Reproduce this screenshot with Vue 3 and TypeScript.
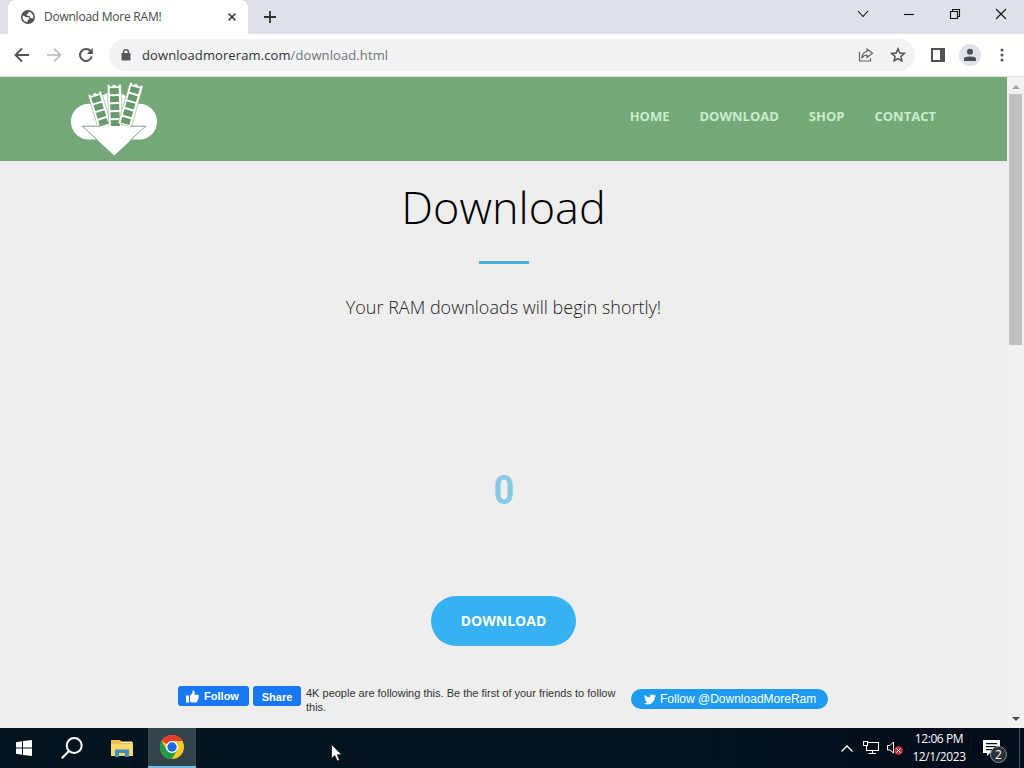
<template>
  <div class="desktop">
    <div class="browser">
      <!-- Tab strip -->
      <div class="tab-strip">
        <div class="tab">
          <svg class="favicon" width="14" height="14" viewBox="0 0 14 14">
            <circle cx="7" cy="7" r="7" fill="#505357" />
            <path d="M2 5.500L5.500 7.300L7.800 7.300L8.500 9L6.700 10L6.500 12C3.500 12 1.600 9.800 1.600 7ZM8 1.800L7 3.500L5.500 4.300L6 5.800L8.500 6L9.500 8L12.200 8.500C12.900 5.500 11 2.500 8 1.800Z" fill="#fff" />
          </svg>
          <span class="tab-title">Download More RAM!</span>
          <svg class="tab-close" width="8" height="8" viewBox="0 0 8 8">
            <path d="M.6 .6L7.400 7.400M7.400 .6L.6 7.400" stroke="#3c4043" stroke-width="1.500" />
          </svg>
        </div>
        <svg class="new-tab" width="12" height="12" viewBox="0 0 12 12">
          <path d="M6 0V12M0 6H12" stroke="#303236" stroke-width="1.800" />
        </svg>
        <div class="window-controls">
          <span v-for="control in windowControls" :key="control.name" class="window-control">
            <svg width="12" height="12" viewBox="0 0 12 12">
              <path :d="control.path" fill="none" stroke="#111" stroke-width="1.100" />
            </svg>
          </span>
        </div>
      </div>

      <!-- Toolbar -->
      <div class="toolbar">
        <span class="tool">
          <svg width="16" height="16" viewBox="0 0 16 16"><path d="M15 8H2M8 1.500L1.500 8L8 14.500" fill="none" stroke="#505357" stroke-width="1.900" /></svg>
        </span>
        <span class="tool">
          <svg width="16" height="16" viewBox="0 0 16 16"><path d="M1 8H14M8 1.500L14.500 8L8 14.500" fill="none" stroke="#b9bbbe" stroke-width="1.700" /></svg>
        </span>
        <span class="tool">
          <svg width="16" height="16" viewBox="0 0 16 16">
            <path d="M13.800 9.500A6 6 0 1 1 12.500 4L13.300 5" fill="none" stroke="#505357" stroke-width="2" />
            <path d="M14.800 1V7H8.800Z" fill="#505357" />
          </svg>
        </span>
        <div class="omnibox">
          <svg class="lock" width="10" height="12" viewBox="0 0 10 12">
            <path d="M2.500 5V3A2.500 2.300 0 0 1 7.500 3V5" fill="none" stroke="#55585c" stroke-width="1.400" />
            <rect x=".5" y="4" width="9" height="7.500" rx="1" fill="#55585c" />
          </svg>
          <span class="url">downloadmoreram.com<span class="url-path">/download.html</span></span>
          <span class="tool">
            <svg width="16" height="16" viewBox="0 0 16 16"><path d="M1.500 5V14H12.500V11M9 2L14.500 6.200L9 10.500V8C6.500 8 5 9 3.700 11.200C4 7.500 6 5 9 4.500Z" fill="none" stroke="#606367" stroke-width="1.200" /></svg>
          </span>
          <span class="tool">
            <svg width="16" height="16" viewBox="0 0 16 16"><path d="M8 1.800L9.800 6L14.300 6.400L10.900 9.400L11.900 13.800L8 11.500L4.100 13.800L5.100 9.400L1.700 6.400L6.200 6Z" fill="none" stroke="#505357" stroke-width="1.500" /></svg>
          </span>
        </div>
        <span class="tool">
          <svg width="14" height="14" viewBox="0 0 14 14"><path d="M0 0H14V14H0ZM2 2V12H9V2Z" fill="#505357" fill-rule="evenodd" /></svg>
        </span>
        <span class="tool">
          <svg width="22" height="22" viewBox="0 0 22 22">
            <circle cx="11" cy="11" r="11" fill="#dfe2e9" />
            <circle cx="11" cy="7.800" r="3" fill="#4b4f58" />
            <path d="M5 17V14.500C5 11.700 17 11.700 17 14.500V17Z" fill="#4b4f58" />
          </svg>
        </span>
        <span class="tool">
          <svg width="4" height="14" viewBox="0 0 4 14"><g fill="#505357"><circle cx="2" cy="2" r="1.500" /><circle cx="2" cy="7" r="1.500" /><circle cx="2" cy="12" r="1.500" /></g></svg>
        </span>
      </div>

      <!-- Page -->
      <div class="viewport">
        <div class="page">
          <header class="site-header">
            <svg class="logo" width="88" height="76" viewBox="0 0 88 76">
              <path d="M18.500 21.800H69.500A17.500 17.800 0 0 1 69.500 57.500H18.500A17.500 17.800 0 0 1 18.500 21.800Z" fill="#fff" />
              <path d="M22 26Q30 11 42 10Q58 10 66 26V44H24Z" fill="#fff" />
              <g v-for="stick in ramSticks" :key="stick.transform" :transform="stick.transform">
                <path d="M0 0H2.500V1.500H5V0H8.500V1.500H11V0H13.800V43H0Z" fill="#fff" stroke="#75a878" stroke-width=".5" />
                <rect v-for="n in stick.chips" :key="n" x="2.200" :y="n * 8 - 4.500" width="9" height="6" fill="#689a6d" />
              </g>
              <path d="M12.300 44.200H75.700L44.300 73.500Z" fill="#fff" />
              <path d="M30 44.200H12.300L28 58.500M60 44.200H75.700L60 58.500" fill="none" stroke="#76937a" stroke-width=".9" />
            </svg>
            <nav class="site-nav">
              <a v-for="link in navLinks" :key="link">{{ link }}</a>
            </nav>
          </header>
          <main class="content">
            <h1>Download</h1>
            <div class="divider"></div>
            <p class="lead">Your RAM downloads will begin shortly!</p>
            <div class="counter">0</div>
            <button class="download">DOWNLOAD</button>
            <div class="social">
              <span class="fb-button fb-follow">
                <svg width="13" height="13" viewBox="0 0 13 13"><path d="M0 5.500H3V12.500H0ZM4 5.500L6.500 3V.5C8.500 0 9.200 2 8.300 4.700H11.800C13 4.700 13 6.300 12.300 6.700C13 7.300 12.700 8.500 12 8.700C12.400 9.500 12 10.300 11.400 10.500C11.500 12 10.800 12.500 9.500 12.500H6L4 11.800Z" fill="#fff" /></svg>
                Follow
              </span>
              <span class="fb-button fb-share">Share</span>
              <p class="fb-text">4K people are following this. Be the first of your friends to follow<br>this.</p>
              <span class="twitter">
                <svg width="12" height="11" viewBox="0 0 24 20"><path d="M24 2.400a10 10 0 0 1-2.800.8A5 5 0 0 0 23.300.5a10 10 0 0 1-3.100 1.200 4.900 4.900 0 0 0-8.400 4.500A14 14 0 0 1 1.700 1a4.900 4.900 0 0 0 1.500 6.600A5 5 0 0 1 1 7a4.900 4.900 0 0 0 3.900 4.900 5 5 0 0 1-2.200.1 4.900 4.900 0 0 0 4.600 3.400A10 10 0 0 1 0 17.500 14 14 0 0 0 21.500 5a10 10 0 0 0 2.500-2.600Z" fill="#fff" /></svg>
                <span>Follow @DownloadMoreRam</span>
              </span>
            </div>
          </main>
        </div>
        <div class="scrollbar">
          <svg width="8" height="4" viewBox="0 0 8 4"><path d="M0 4L4 0L8 4Z" fill="#a1a1a1" /></svg>
          <div class="thumb"></div>
          <svg class="scroll-down" width="8" height="4" viewBox="0 0 8 4"><path d="M0 0L4 4L8 0Z" fill="#4b4b4b" /></svg>
        </div>
      </div>
    </div>

    <!-- Taskbar -->
    <div class="taskbar">
      <span class="task">
        <svg width="16" height="16" viewBox="0 0 16 16"><path d="M0 2.300L6 1.300V7.500H0ZM7 1.100L16 0V7.500H7ZM0 8.500H6V14.700L0 13.700ZM7 8.500H16V16L7 14.900Z" fill="#fff" /></svg>
      </span>
      <span class="task">
        <svg width="22" height="22" viewBox="0 0 22 22"><circle cx="13.200" cy="8.500" r="7.500" fill="none" stroke="#fff" stroke-width="2" /><path d="M8 14L.8 21.300" stroke="#fff" stroke-width="2.200" /></svg>
      </span>
      <span class="task task-files">
        <svg width="22" height="19" viewBox="0 0 22 19">
          <path d="M0 1H9L11 3H22V17H0Z" fill="#edbd4e" />
          <path d="M0 5H22V17H0Z" fill="#fbd76f" />
          <path d="M10 2.500H21V4H10Z" fill="#fff0c0" />
          <path d="M4 10.500H18V18H14V14H8V18H4Z" fill="#408fbd" />
        </svg>
      </span>
      <span class="task task-active">
        <svg width="24" height="24" viewBox="0 0 24 24">
          <circle cx="12" cy="12" r="12" fill="#fbc928" />
          <path d="M12 12L1.600 6A12 12 0 0 1 22.400 6H12Z" fill="#e33b2e" />
          <path d="M1.600 6A12 12 0 0 0 12 24L17.200 15L12 12L6.800 15Z" fill="#25994a" />
          <circle cx="12" cy="12" r="6" fill="#fff" />
          <circle cx="12" cy="12" r="4.700" fill="#1c6be0" />
        </svg>
      </span>
      <div class="tray">
        <svg width="12" height="7" viewBox="0 0 12 7"><path d="M.5 6.500L6 1L11.500 6.500" fill="none" stroke="#fff" stroke-width="1.300" /></svg>
        <svg class="network" width="17" height="14" viewBox="0 0 17 14"><path d="M5 1.500H15.500V9.500H3.500V5M9.500 9.500V12.500M5.500 12.500H13M.5 .5H4.500V4.500H.5Z" fill="none" stroke="#fff" stroke-width="1.100" /></svg>
        <svg class="volume" width="16" height="14" viewBox="0 0 16 14">
          <path d="M.5 4.500H3L6.500 1V12L3 9H.5Z" fill="none" stroke="#fff" stroke-width="1" />
          <circle cx="11.500" cy="9.500" r="4.300" fill="#d23539" />
          <path d="M9.500 7.500L13.500 11.500M13.500 7.500L9.500 11.500" stroke="#fff" stroke-width="1" />
        </svg>
        <div class="clock">
          <span class="time">12:06 PM</span>
          <span class="date">12/1/2023</span>
        </div>
        <div class="action-center">
          <svg width="17" height="16" viewBox="0 0 17 16"><path d="M0 0H17V13H7L4 16V13H0ZM3 3V4.200H14V3ZM3 6V7.200H14V6ZM3 9V10.200H11V9Z" fill="#fff" fill-rule="evenodd" /></svg>
          <span class="badge">2</span>
        </div>
      </div>
    </div>

    <svg class="cursor" width="12" height="18" viewBox="0 0 12 18"><path d="M.5 .5V14.500L3.800 11.500L6.300 17L8.500 16L6.200 10.700H10.700Z" fill="#fff" stroke="#111" stroke-width=".7" /></svg>
  </div>
</template>

<script setup lang="ts">
interface WindowControl {
  name: string
  path: string
}

interface RamStick {
  transform: string
  chips: number
}

const windowControls: WindowControl[] = [
  { name: 'search-tabs', path: 'M1 3L6 8.500L11 3' },
  { name: 'minimize', path: 'M1 6.500H11' },
  { name: 'restore', path: 'M1.500 3.500H8.500V10.500H1.500ZM3.500 3.500V1.500H10.500V8.500H8.500' },
  { name: 'close', path: 'M1 1L11 11M11 1L1 11' }
]

const ramSticks: RamStick[] = [
  { transform: 'translate(18 13) rotate(-17)', chips: 4 },
  { transform: 'translate(37.300 2.800) rotate(-2)', chips: 5 },
  { transform: 'translate(60 0) rotate(16)', chips: 5 }
]

const navLinks: string[] = ['HOME', 'DOWNLOAD', 'SHOP', 'CONTACT']
</script>

<style>
body {
  margin: 0;
  overflow: hidden;
}
</style>

<style scoped>
.desktop {
  position: relative;
  width: 1024px;
  height: 768px;
  overflow: hidden;
  font-family: "Open Sans", "Noto Sans", sans-serif;
}

.desktop svg {
  display: block;
  flex: none;
}

.tab-strip {
  display: flex;
  height: 34px;
  background: #dee1e7;
  padding-left: 8px;
}

.tab {
  display: flex;
  align-items: center;
  box-sizing: border-box;
  width: 240px;
  padding: 0 12px 0 13px;
  background: #fff;
  border-radius: 8px 8px 0 0;
}

.tab-title {
  flex: 1;
  margin-left: 9px;
  padding-bottom: 2px;
  font-size: 12px;
  letter-spacing: -0.24px;
  color: #45484c;
  white-space: nowrap;
}

.new-tab {
  margin: 11px 0 0 16px;
}

.window-controls {
  display: flex;
  margin-left: auto;
}

.window-control {
  display: flex;
  justify-content: center;
  width: 46px;
  padding-top: 8px;
}

.toolbar {
  display: flex;
  align-items: center;
  box-sizing: border-box;
  height: 43px;
  padding: 0 6px;
  background: #fff;
  border-bottom: 1px solid #dce5dc;
}

.tool {
  display: flex;
  align-items: center;
  justify-content: center;
  width: 32px;
  height: 32px;
}

.omnibox {
  display: flex;
  align-items: center;
  box-sizing: border-box;
  width: 806px;
  height: 32px;
  margin: 0 7px;
  padding: 0 1px 0 12px;
  border-radius: 16px;
  background: #f1f3f4;
}

.url {
  flex: 1;
  margin-left: 11px;
  font-size: 13px;
  letter-spacing: 0.1px;
  color: #303236;
}

.url-path {
  color: #717479;
}

.viewport {
  display: flex;
  height: 651px;
}

.page {
  width: 1007px;
  background: #eee;
}

.site-header {
  display: flex;
  justify-content: space-between;
  box-sizing: border-box;
  height: 84px;
  padding: 5px 71px 0 70px;
  background: #75a878;
}

.site-nav {
  display: flex;
  gap: 30px;
  padding-top: 25px;
  font-size: 13px;
  line-height: 18px;
  font-weight: 700;
  color: #c8eccb;
}

.content {
  display: flex;
  flex-direction: column;
  align-items: center;
}

h1 {
  margin: 16px 0 0;
  font-size: 45px;
  line-height: 60px;
  font-weight: 300;
  color: #000;
}

.divider {
  width: 50px;
  height: 3px;
  margin-top: 24px;
  background: #48afd9;
}

.lead {
  margin: 30px 0 0;
  font-size: 18px;
  line-height: 26px;
  font-weight: 300;
  color: #222;
}

.counter {
  margin-top: 145px;
  font-family: Roboto, sans-serif;
  font-size: 41px;
  line-height: 50px;
  font-weight: 700;
  color: #87c9e4;
  transform: scaleX(0.88);
}

.download {
  width: 145px;
  height: 50px;
  margin-top: 81px;
  padding: 0 0 2px;
  border: 0;
  border-radius: 25px;
  background: #36b1f1;
  color: #fff;
  font: 700 14px "Open Sans", sans-serif;
}

.social {
  display: flex;
  align-items: flex-start;
  align-self: stretch;
  margin-top: 40px;
  padding-left: 178px;
  font-family: "Liberation Sans", Arial, sans-serif;
}

.fb-button {
  display: flex;
  align-items: center;
  justify-content: center;
  box-sizing: border-box;
  height: 20px;
  border-radius: 3px;
  background: #1877f2;
  color: #fff;
  font-size: 11px;
  font-weight: 700;
}

.fb-follow {
  width: 71px;
  padding-right: 2px;
  gap: 5px;
}

.fb-share {
  width: 48px;
  margin-left: 4px;
  padding-top: 1px;
}

.fb-text {
  width: 325px;
  margin: 0;
  padding-left: 5px;
  box-sizing: border-box;
  font-size: 11px;
  line-height: 14px;
  color: #333;
  white-space: nowrap;
}

.twitter {
  display: flex;
  align-items: center;
  box-sizing: border-box;
  width: 197px;
  height: 20px;
  margin: 3px 0 0 5px;
  padding-left: 13px;
  gap: 4px;
  border-radius: 10px;
  background: #1d9bf0;
  color: #fff;
  font-size: 12px;
  white-space: nowrap;
}

.scrollbar {
  display: flex;
  flex-direction: column;
  align-items: center;
  box-sizing: border-box;
  width: 17px;
  padding: 8px 0 7px;
  background: #f1f1f1;
}

.thumb {
  width: 13px;
  height: 251px;
  margin-top: 5px;
  background: #c1c1c1;
}

.scroll-down {
  margin-top: auto;
}

.taskbar {
  display: flex;
  height: 40px;
  background: linear-gradient(90deg, #02151e 0%, #02151e 60%, #030c1a 90%);
}

.task {
  display: flex;
  align-items: center;
  justify-content: center;
  box-sizing: border-box;
  width: 48px;
  height: 40px;
}

.task-files {
  width: 52px;
}

.task-active {
  background: #33454c;
  border-bottom: 2px solid #76b9ed;
}

.tray {
  display: flex;
  align-items: center;
  margin-left: auto;
  color: #fff;
}

.network {
  margin-left: 10px;
}

.volume {
  margin-left: 7px;
}

.clock {
  display: flex;
  flex-direction: column;
  align-items: center;
  width: 72px;
  font-size: 12px;
  line-height: 18px;
  letter-spacing: -0.4px;
  white-space: nowrap;
}

.action-center {
  position: relative;
  box-sizing: border-box;
  width: 45px;
  height: 40px;
  padding: 12px 0 0 8px;
  border-right: 1px solid #46515b;
  margin-right: 4px;
}

.badge {
  position: absolute;
  left: 15px;
  top: 18px;
  width: 15px;
  height: 15px;
  border: 1px solid #8a9097;
  border-radius: 50%;
  background: #2b3036;
  font-size: 12px;
  line-height: 15px;
  text-align: center;
}

.cursor {
  position: absolute;
  left: 331px;
  top: 744px;
}
</style>
